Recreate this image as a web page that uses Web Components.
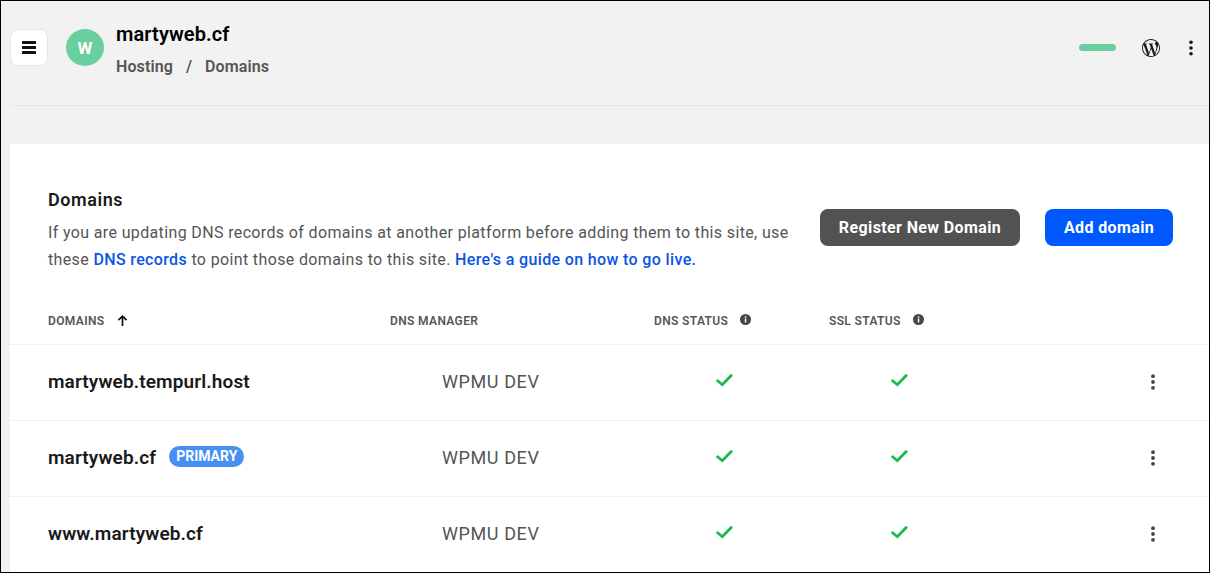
<!DOCTYPE html>
<html>
<head>
<meta charset="utf-8">
<title>Domains</title>
<style>
  html, body { margin: 0; padding: 0; background: #f2f2f2; }
  body { font-family: Roboto, "Liberation Sans", sans-serif; }
</style>
</head>
<body>
<app-shell>
  <site-header slot="header" site="martyweb.cf" letter="W"></site-header>
  <domains-card>
    <domain-row name="martyweb.tempurl.host" manager="WPMU DEV"></domain-row>
    <domain-row name="martyweb.cf" manager="WPMU DEV" primary></domain-row>
    <domain-row name="www.martyweb.cf" manager="WPMU DEV"></domain-row>
  </domains-card>
</app-shell>

<script>
const dots = (r) => `<svg width="6" height="16" viewBox="0 0 6 16" fill="currentColor" style="display:block"><circle cx="3" cy="2.2" r="${r}"/><circle cx="3" cy="8" r="${r}"/><circle cx="3" cy="13.8" r="${r}"/></svg>`;
const WP_PATH = 'M21.469 6.825c.84 1.537 1.318 3.3 1.318 5.175 0 3.979-2.156 7.456-5.363 9.325l3.295-9.527c.615-1.54.82-2.771.82-3.864 0-.405-.026-.78-.07-1.11m-7.981.105c.647-.03 1.232-.105 1.232-.105.582-.075.514-.93-.067-.899 0 0-1.755.135-2.88.135-1.064 0-2.85-.15-2.85-.15-.585-.03-.661.855-.075.885 0 0 .54.061 1.125.09l1.68 4.605-2.37 7.08L5.354 6.9c.649-.03 1.234-.1 1.234-.1.585-.075.516-.93-.065-.896 0 0-1.746.138-2.874.138-.2 0-.438-.008-.69-.015C4.911 3.15 8.235 1.215 12 1.215c2.809 0 5.365 1.072 7.286 2.833-.046-.003-.091-.009-.141-.009-1.06 0-1.812.923-1.812 1.914 0 .89.513 1.643 1.06 2.531.411.72.89 1.643.89 2.977 0 .915-.354 1.994-.821 3.479l-1.075 3.585-3.9-11.61.001.014zM12 22.784c-1.059 0-2.081-.153-3.048-.437l3.237-9.406 3.315 9.087c.024.053.05.101.078.149-1.12.393-2.325.609-3.582.609M1.211 12c0-1.564.336-3.05.935-4.39L7.29 21.709C3.694 19.96 1.212 16.271 1.211 12M12 0C5.385 0 0 5.385 0 12s5.385 12 12 12 12-5.385 12-12S18.615 0 12 0';

class AppShell extends HTMLElement {
  constructor() {
    super();
    this.attachShadow({mode: 'open'}).innerHTML = `
      <style>
        :host {
          display: block;
          box-sizing: border-box;
          height: 573px;
          border: 1px solid #000;
          background: #f2f2f2;
          overflow: hidden;
        }
      </style>
      <slot name="header"></slot>
      <slot></slot>`;
  }
}

class SiteHeader extends HTMLElement {
  connectedCallback() {
    const site = this.getAttribute('site');
    const letter = this.getAttribute('letter');
    this.attachShadow({mode: 'open'}).innerHTML = `
      <style>
        :host {
          display: flex;
          align-items: flex-start;
          box-sizing: border-box;
          height: 105px;
          margin-left: 9px;
          padding: 28px 15px 0 0;
          border-bottom: 1px solid #e6e6e6;
          color: #000;
        }
        .menu {
          box-sizing: border-box;
          width: 38px;
          height: 37px;
          background: #fff;
          border: 1px solid #e6e6e6;
          border-radius: 8px;
          display: flex;
          align-items: center;
          justify-content: center;
          flex: none;
        }
        .avatar {
          width: 38px;
          height: 37px;
          margin-left: 18px;
          border-radius: 50%;
          background: #69cf9e;
          color: #fff;
          font-size: 17px;
          font-weight: 700;
          display: flex;
          align-items: center;
          justify-content: center;
          flex: none;
        }
        .titles { margin-left: 12px; margin-top: -9px; }
        .site { font-size: 20px; font-weight: 600; line-height: 28px; letter-spacing: .1px; }
        .crumbs {
          display: flex;
          gap: 13px;
          margin-top: 7px;
          font-size: 16px;
          font-weight: 600;
          line-height: 24px;
          letter-spacing: .1px;
          color: #555;
        }
        .right {
          margin-left: auto;
          display: flex;
          align-items: center;
          height: 37px;
        }
        .bar { width: 37px; height: 7px; border-radius: 4px; background: #69cf9e; }
        .wp { margin-left: 26px; display: block; color: #1a1a1a; }
        .more { margin-left: 28px; display: block; color: #111; }
      </style>
      <div class="menu">
        <svg width="14" height="13" viewBox="0 0 14 13" fill="#111"><rect width="14" height="3" rx=".5"/><rect y="5" width="14" height="3" rx=".5"/><rect y="10" width="14" height="3" rx=".5"/></svg>
      </div>
      <div class="avatar">${letter}</div>
      <div class="titles">
        <div class="site">${site}</div>
        <div class="crumbs"><span>Hosting</span><span>/</span><span>Domains</span></div>
      </div>
      <div class="right">
        <div class="bar"></div>
        <svg class="wp" width="18" height="18" viewBox="0 0 24 24" fill="currentColor"><path d="${WP_PATH}"/></svg>
        <span class="more">${dots(1.8)}</span>
      </div>`;
  }
}

class InfoIcon extends HTMLElement {
  constructor() {
    super();
    this.attachShadow({mode: 'open'}).innerHTML = `
      <style>:host { display: inline-block; line-height: 0; } svg { display: block; }</style>
      <svg width="11" height="11" viewBox="0 0 11 11"><circle cx="5.5" cy="5.5" r="5.5" fill="#4a4545"/><rect x="4.8" y="4.6" width="1.5" height="3.9" fill="#fff"/><rect x="4.8" y="2.3" width="1.5" height="1.4" fill="#fff"/></svg>`;
  }
}

class DomainsCard extends HTMLElement {
  constructor() {
    super();
    this.attachShadow({mode: 'open'}).innerHTML = `
      <style>
        :host {
          display: block;
          margin: 38px 0 0 9px;
          background: #fff;
          height: 500px;
        }
        .intro {
          display: flex;
          justify-content: space-between;
          padding: 44px 36px 0 38px;
          height: 116px;
          box-sizing: border-box;
        }
        h2 { margin: 0; font-size: 18px; font-weight: 600; line-height: 24px; color: #1a1a1a; letter-spacing: .55px; }
        .copy { margin: 7px 0 0; font-size: 16px; line-height: 27px; color: #555; letter-spacing: .36px; white-space: nowrap; }
        a { color: #0a55e6; font-weight: 500; text-decoration: none; }
        .actions { display: flex; gap: 25px; padding-top: 21px; }
        button {
          height: 37px;
          border: 0;
          border-radius: 8px;
          color: #fff;
          font: 700 16px Roboto, "Liberation Sans", sans-serif;
          letter-spacing: .38px;
          padding: 0;
        }
        .dark { width: 200px; background: #525252; }
        .blue { width: 128px; background: #0059ff; }
        .head {
          display: grid;
          grid-template-columns: 342px 264px 175px 1fr;
          align-items: center;
          height: 85px;
          box-sizing: border-box;
          padding: 38px 0 0 38px;
          border-bottom: 1px solid #f0f0f0;
          font-size: 12px;
          font-weight: 600;
          letter-spacing: .36px;
          color: #555;
          text-transform: uppercase;
        }
        .head > div { display: flex; align-items: center; }
        .arrow { margin-left: 12px; display: block; position: relative; top: -1px; }
        info-icon { margin-left: 12px; position: relative; top: -2px; }
      </style>
      <div class="intro">
        <div>
          <h2>Domains</h2>
          <div class="copy">
            <div>If you are updating DNS records of domains at another platform before adding them to this site, use</div>
            <div>these <a>DNS records</a> to point those domains to this site. <a>Here's a guide on how to go live.</a></div>
          </div>
        </div>
        <div class="actions">
          <button class="dark">Register New Domain</button>
          <button class="blue">Add domain</button>
        </div>
      </div>
      <div class="head">
        <div>Domains<svg class="arrow" width="11" height="11" viewBox="0 0 11 11" fill="none" stroke="#0a1020" stroke-width="1.7"><path d="M5.5 11V1.2M1.4 5.2l4.1-4 4.1 4"/></svg></div>
        <div>DNS Manager</div>
        <div>DNS Status<info-icon></info-icon></div>
        <div>SSL Status<info-icon></info-icon></div>
      </div>
      <slot></slot>`;
  }
}

class DomainRow extends HTMLElement {
  connectedCallback() {
    const check = `<svg width="18" height="14" viewBox="0 0 18 14" fill="none" stroke="#1cb84e" stroke-width="2.8"><path d="M1.7 7l5.6 4.7L17 1.7"/></svg>`;
    const badge = this.hasAttribute('primary') ? '<span class="badge">Primary</span>' : '';
    this.attachShadow({mode: 'open'}).innerHTML = `
      <style>
        :host {
          display: grid;
          grid-template-columns: 342px 264px 175px 1fr;
          align-items: center;
          box-sizing: border-box;
          height: 76px;
          padding: 0 0 2px 38px;
          border-bottom: 1px solid #f0f0f0;
        }
        .name { display: flex; align-items: center; font-size: 19px; font-weight: 600; color: #1a1a1a; letter-spacing: .12px; white-space: nowrap; }
        .badge {
          margin-left: 13px;
          padding: 0 7px;
          height: 21px;
          line-height: 20px;
          border-radius: 11px;
          background: #458ff5;
          color: #fff;
          font-size: 14px;
          font-weight: 700;
          letter-spacing: 0;
          text-transform: uppercase;
          position: relative;
          top: -1px;
        }
        .manager { padding-left: 52px; font-size: 18px; color: #555; letter-spacing: .6px; }
        .check { padding-left: 61px; line-height: 0; position: relative; top: -2px; }
        .last { display: flex; justify-content: space-between; align-items: center; }
        .more { margin-right: 53px; color: #444; }
      </style>
      <div class="name">${this.getAttribute('name')}${badge}</div>
      <div class="manager">${this.getAttribute('manager')}</div>
      <div class="check">${check}</div>
      <div class="last"><div class="check">${check}</div><div class="more">${dots(1.9)}</div></div>`;
  }
}

customElements.define('app-shell', AppShell);
customElements.define('site-header', SiteHeader);
customElements.define('info-icon', InfoIcon);
customElements.define('domains-card', DomainsCard);
customElements.define('domain-row', DomainRow);
</script>
</body>
</html>
